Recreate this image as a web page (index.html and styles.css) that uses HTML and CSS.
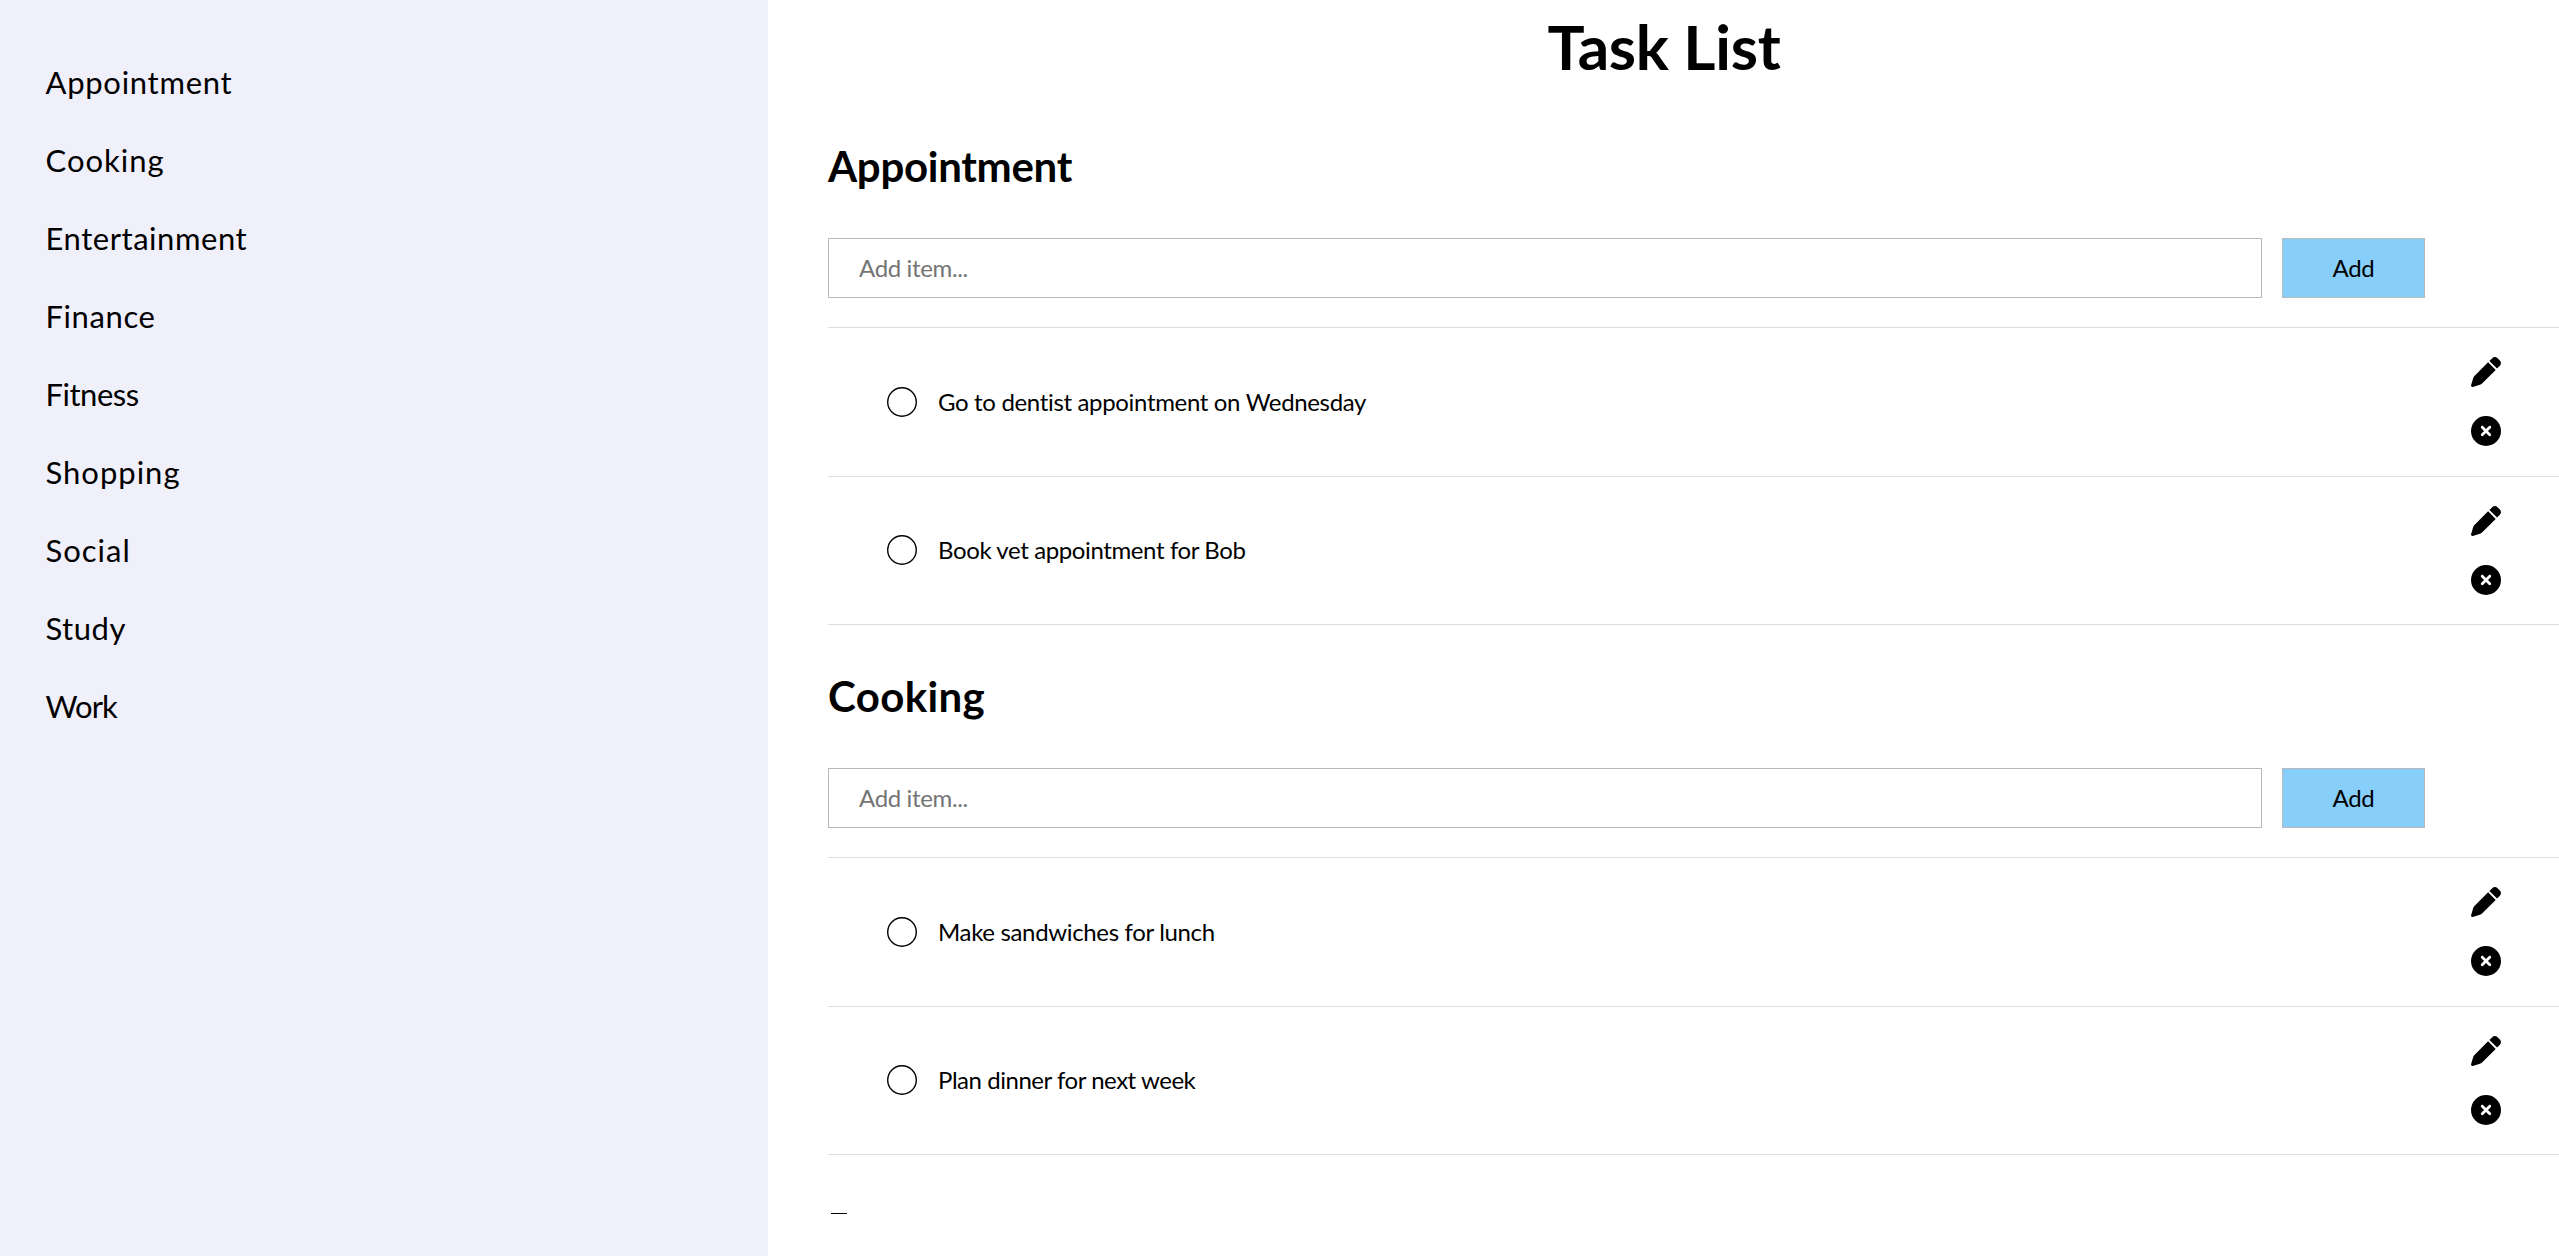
FILE: index.html
```
<!DOCTYPE html>
<html lang="en">
<head>
<meta charset="utf-8">
<title>Task List</title>
<link rel="stylesheet" href="styles.css">
</head>
<body>
<svg class="sprite" width="0" height="0">
  <symbol id="circle" viewBox="0 0 30 30"><circle cx="15" cy="15" r="14.3" fill="none" stroke="#000" stroke-width="1.4"/></symbol>
  <symbol id="pen" viewBox="0 0 512 512"><path d="M362.7 19.3L314.3 67.7 444.3 197.7l48.4-48.4c25-25 25-65.5 0-90.5L453.3 19.3c-25-25-65.5-25-90.5 0zm-71 71L58.6 323.5c-10.4 10.4-18 23.3-22.2 37.4L1 481.2C-1.5 489.7 .8 498.8 7 505s15.3 8.5 23.7 6.1l120.3-35.4c14.1-4.2 27-11.8 37.4-22.2L421.7 220.3 291.7 90.3z"/></symbol>
  <symbol id="remove" viewBox="0 0 512 512"><path d="M256 512A256 256 0 1 0 256 0a256 256 0 1 0 0 512zM175 175c9.4-9.4 24.6-9.4 33.9 0l47 47 47-47c9.4-9.4 24.6-9.4 33.9 0s9.4 24.6 0 33.9l-47 47 47 47c9.4 9.4 9.4 24.6 0 33.9s-24.6 9.4-33.9 0l-47-47-47 47c-9.4 9.4-24.6 9.4-33.9 0s-9.4-24.6 0-33.9l47-47-47-47c-9.4-9.4-9.4-24.6 0-33.9z"/></symbol>
</svg>
<div class="app">
  <nav class="sidebar">
    <a class="link link-appointment">Appointment</a>
    <a class="link link-cooking">Cooking</a>
    <a class="link link-entertainment">Entertainment</a>
    <a class="link link-finance">Finance</a>
    <a class="link link-fitness">Fitness</a>
    <a class="link link-shopping">Shopping</a>
    <a class="link link-social">Social</a>
    <a class="link link-study">Study</a>
    <a class="link link-work">Work</a>
  </nav>
  <main class="content">
    <h1 class="title">Task List</h1>
    <section class="category">
      <h2 class="heading heading-appointment">Appointment</h2>
      <form class="add-form">
        <input class="field" type="text" placeholder="Add item...">
        <button class="add" type="button">Add</button>
      </form>
      <ul class="tasks">
        <li class="task">
          <svg class="icon"><use href="#circle"/></svg><span class="label">Go to dentist appointment on Wednesday</span>
          <span class="actions"><svg class="icon"><use href="#pen"/></svg><svg class="icon"><use href="#remove"/></svg></span>
        </li>
        <li class="task">
          <svg class="icon"><use href="#circle"/></svg><span class="label label-book">Book vet appointment for Bob</span>
          <span class="actions"><svg class="icon"><use href="#pen"/></svg><svg class="icon"><use href="#remove"/></svg></span>
        </li>
      </ul>
    </section>
    <section class="category">
      <h2 class="heading heading-cooking">Cooking</h2>
      <form class="add-form">
        <input class="field" type="text" placeholder="Add item...">
        <button class="add" type="button">Add</button>
      </form>
      <ul class="tasks">
        <li class="task">
          <svg class="icon"><use href="#circle"/></svg><span class="label">Make sandwiches for lunch</span>
          <span class="actions"><svg class="icon"><use href="#pen"/></svg><svg class="icon"><use href="#remove"/></svg></span>
        </li>
        <li class="task">
          <svg class="icon"><use href="#circle"/></svg><span class="label label-plan">Plan dinner for next week</span>
          <span class="actions"><svg class="icon"><use href="#pen"/></svg><svg class="icon"><use href="#remove"/></svg></span>
        </li>
      </ul>
    </section>
    <div class="next-edge"></div>
  </main>
</div>
</body>
</html>
```
FILE: styles.css
```
* { box-sizing: border-box; }
body {
  margin: 0;
  background: #fff;
  color: #000;
  font-family: Lato, "Liberation Sans", sans-serif;
  overflow: hidden;
}
.sprite { display: block; }
.app { display: flex; height: 1256px; }

.sidebar {
  display: flex;
  flex-direction: column;
  flex: 0 0 768px;
  padding: 43px 0 0 45.5px;
  background: #f0f0fa;
}
.link { font-size: 31px; line-height: 78px; }
.link-appointment { letter-spacing: 0.72px; }
.link-cooking { letter-spacing: 1px; }
.link-entertainment { letter-spacing: 0.55px; }
.link-finance { letter-spacing: 0.6px; }
.link-fitness { letter-spacing: -0.48px; }
.link-shopping { letter-spacing: 1px; }
.link-social { letter-spacing: 1px; }
.link-study { letter-spacing: 0.5px; }
.link-work { letter-spacing: -0.9px; }

.content { flex: 1; min-width: 0; padding: 9px 0 0 60px; }
.title {
  margin: 0 59px 58px 0;
  font-size: 62px;
  line-height: 74px;
  letter-spacing: -0.3px;
  text-align: center;
}
.category { margin-bottom: 46px; }
.heading { margin: 0 0 47px; font-size: 42px; line-height: 50px; }
.heading-appointment { letter-spacing: -0.3px; }
.heading-cooking { letter-spacing: 0.35px; }

.add-form { display: flex; gap: 20px; height: 60px; margin-bottom: 29px; }
.field, .add {
  border: 1px solid #b8b8b8;
  border-radius: 0;
  color: #000;
  font-family: inherit;
  font-size: 24px;
  letter-spacing: -0.35px;
}
.field { width: 1434px; padding: 0 30px 2px; background: #fff; }
.field::placeholder { color: #757575; }
.add { width: 143px; padding: 0 0 2px; background: #87cefa; }

.tasks { margin: 0; padding: 0; list-style: none; border-top: 1px solid #ddd; }
.task {
  display: flex;
  align-items: center;
  height: 148.5px;
  padding: 0 58px 0 59px;
  border-bottom: 1px solid #ddd;
}
.label { flex: 1; margin-left: 21px; font-size: 24px; line-height: 30px; letter-spacing: -0.34px; }
.label-book { letter-spacing: -0.39px; }
.label-plan { letter-spacing: -0.46px; }
.actions { display: flex; flex-direction: column; gap: 29px; }
.icon { display: block; width: 30px; height: 30px; }

/* top edge of the following category, cut off by the fold */
.next-edge { width: 16px; height: 1px; margin: 58px 0 0 3px; background: #000; }
```
